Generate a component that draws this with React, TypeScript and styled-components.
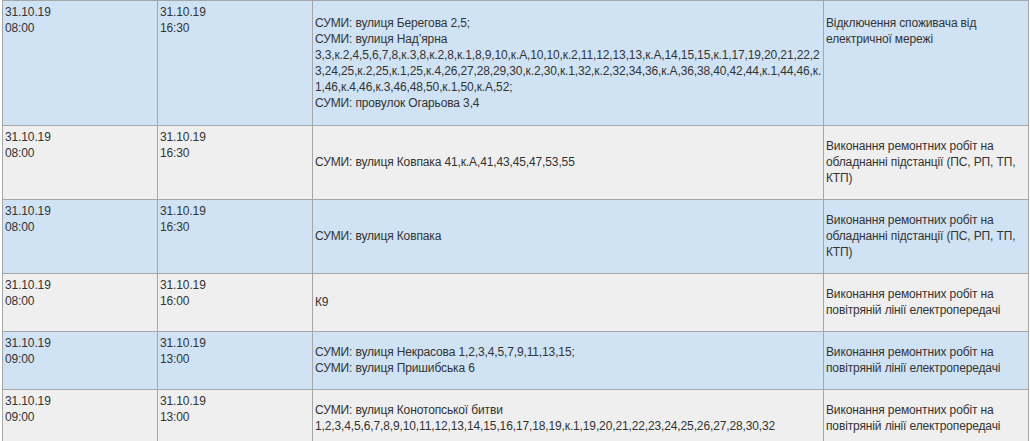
import React from 'react';
import styled, { createGlobalStyle } from 'styled-components';

const GlobalStyle = createGlobalStyle`
  html, body {
    margin: 0;
    padding: 0;
    background: #ffffff;
  }
  body {
    font-family: "Liberation Sans", Arial, sans-serif;
    font-size: 12px;
    letter-spacing: -0.13px;
    color: #333333;
  }
`;

interface Outage {
  startDate: string;
  startTime: string;
  endDate: string;
  endTime: string;
  address: string[];
  reason: string[];
  reasonTop?: boolean;
  pad?: number;
}

const rows: Outage[] = [
  {
    startDate: '31.10.19',
    startTime: '08:00',
    endDate: '31.10.19',
    endTime: '16:30',
    address: [
      'СУМИ: вулиця Берегова 2,5;',
      'СУМИ: вулиця Над’ярна',
      '3,3,к.2,4,5,6,7,8,к.3,8,к.2,8,к.1,8,9,10,к.А,10,10,к.2,11,12,13,13,к.А,14,15,15,к.1,17,19,20,21,22,2',
      '3,24,25,к.2,25,к.1,25,к.4,26,27,28,29,30,к.2,30,к.1,32,к.2,32,34,36,к.А,36,38,40,42,44,к.1,44,46,к.',
      '1,46,к.4,46,к.3,46,48,50,к.1,50,к.А,52;',
      'СУМИ: провулок Огарьова 3,4',
    ],
    reason: ['Відключення споживача від', 'електричної мережі'],
    reasonTop: true,
    pad: 14,
  },
  {
    startDate: '31.10.19',
    startTime: '08:00',
    endDate: '31.10.19',
    endTime: '16:30',
    address: ['СУМИ: вулиця Ковпака 41,к.А,41,43,45,47,53,55'],
    reason: ['Виконання ремонтних робіт на', 'обладнанні підстанції (ПС, РП, ТП,', 'КТП)'],
  },
  {
    startDate: '31.10.19',
    startTime: '08:00',
    endDate: '31.10.19',
    endTime: '16:30',
    address: ['СУМИ: вулиця Ковпака'],
    reason: ['Виконання ремонтних робіт на', 'обладнанні підстанції (ПС, РП, ТП,', 'КТП)'],
  },
  {
    startDate: '31.10.19',
    startTime: '08:00',
    endDate: '31.10.19',
    endTime: '16:00',
    address: ['К9'],
    reason: ['Виконання ремонтних робіт на', 'повітряній лінії електропередачі'],
  },
  {
    startDate: '31.10.19',
    startTime: '09:00',
    endDate: '31.10.19',
    endTime: '13:00',
    address: ['СУМИ: вулиця Некрасова 1,2,3,4,5,7,9,11,13,15;', 'СУМИ: вулиця Пришибська 6'],
    reason: ['Виконання ремонтних робіт на', 'повітряній лінії електропередачі'],
  },
  {
    startDate: '31.10.19',
    startTime: '09:00',
    endDate: '31.10.19',
    endTime: '13:00',
    address: [
      'СУМИ: вулиця Конотопської битви',
      '1,2,3,4,5,6,7,8,9,10,11,12,13,14,15,16,17,18,19,к.1,19,20,21,22,23,24,25,26,27,28,30,32',
    ],
    reason: ['Виконання ремонтних робіт на', 'повітряній лінії електропередачі'],
  },
];

const Table = styled.table`
  margin: 0 0 0 2px;
  width: 1026px;
  table-layout: fixed;
  border-collapse: collapse;
  line-height: 16px;
`;

const Row = styled.tr<{ $shaded: boolean }>`
  background-color: ${p => (p.$shaded ? '#d0e3f4' : '#efefef')};
`;

const DateCell = styled.td`
  vertical-align: top;
  padding: 3px 2px;
  border: 1px solid #a6a6a6;
`;

const TextCell = styled.td<{ $top?: boolean; $pad?: number }>`
  vertical-align: ${p => (p.$top ? 'top' : 'middle')};
  padding: ${p => (p.$pad ? `${p.$pad}px 2px` : '12px 2px 13px')};
  border: 1px solid #a6a6a6;
`;

const Line = styled.div`
  white-space: nowrap;
`;

export default function App() {
  return (
    <>
      <GlobalStyle />
      <Table>
        <colgroup>
          <col style={{ width: 155 }} />
          <col style={{ width: 155 }} />
          <col style={{ width: 511 }} />
          <col style={{ width: 205 }} />
        </colgroup>
        <tbody>
          {rows.map((r, i) => (
            <Row key={i} $shaded={i % 2 === 0}>
              <DateCell>
                <Line>{r.startDate}</Line>
                <Line>{r.startTime}</Line>
              </DateCell>
              <DateCell>
                <Line>{r.endDate}</Line>
                <Line>{r.endTime}</Line>
              </DateCell>
              <TextCell $pad={r.pad}>
                {r.address.map((a, j) => (
                  <Line key={j}>{a}</Line>
                ))}
              </TextCell>
              <TextCell $top={r.reasonTop} $pad={r.pad}>
                {r.reason.map((t, j) => (
                  <Line key={j}>{t}</Line>
                ))}
              </TextCell>
            </Row>
          ))}
        </tbody>
      </Table>
    </>
  );
}
